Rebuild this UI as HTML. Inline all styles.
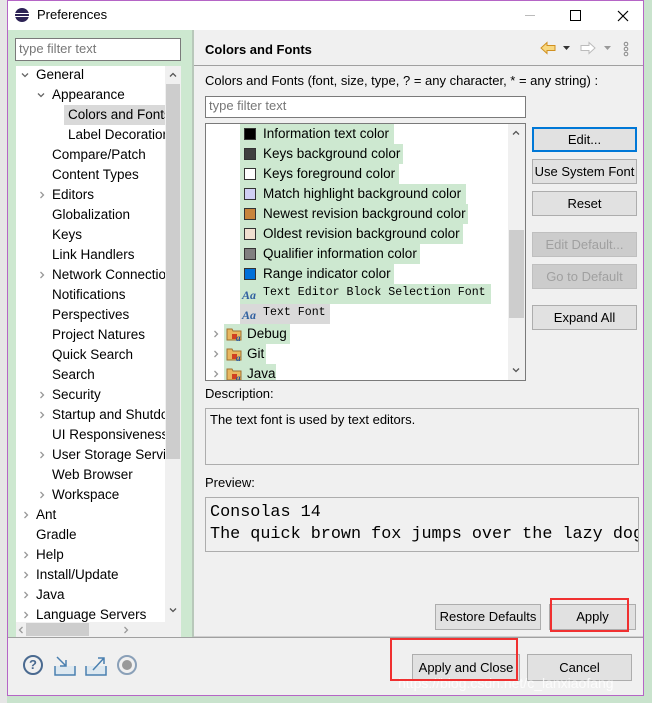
<!DOCTYPE html>
<html><head><meta charset="utf-8"><style>
*{margin:0;padding:0;box-sizing:border-box}
body{width:652px;height:703px;overflow:hidden;background:#c9e3cd;font-family:"Liberation Sans","Noto Sans CJK SC",sans-serif;font-size:13px;color:#000;position:relative}
.a{position:absolute}
.t{position:absolute;white-space:nowrap;line-height:20px;top:0}
.btn{position:absolute;background:#e1e1e1;border:1px solid #adadad;text-align:center;line-height:24px;font-size:13px}
.dis{color:#a0a0a0;background:#cccccc;border-color:#bfbfbf}
.sw{position:absolute;width:12px;height:12px;border:1px solid #333}
.gr{position:absolute;background:#cde8d0;height:20px}
.mono{font-family:"Liberation Mono",monospace}
.cr{position:absolute;width:8px;height:8px}
.tr .t{font-size:13.5px}
</style></head><body>
<svg width="0" height="0" style="position:absolute"><defs>
<symbol id="r" viewBox="0 0 8 8"><polyline points="2.5,1 5.5,4 2.5,7" fill="none" stroke="#999" stroke-width="1.3"/></symbol>
<symbol id="d" viewBox="0 0 8 8"><polyline points="1,2.5 4,5.5 7,2.5" fill="none" stroke="#666" stroke-width="1.3"/></symbol>
<symbol id="u" viewBox="0 0 8 8"><polyline points="1,5.5 4,2.5 7,5.5" fill="none" stroke="#555" stroke-width="1.3"/></symbol>
<symbol id="dn" viewBox="0 0 8 8"><polyline points="1,2.5 4,5.5 7,2.5" fill="none" stroke="#555" stroke-width="1.3"/></symbol>
<symbol id="f" viewBox="0 0 16 16"><path d="M1 3h5l1 2h8v9H1z" fill="#e8b860" stroke="#a07030"/><rect x="6" y="8" width="5" height="5" fill="#d04020"/><text x="10" y="15" font-size="9" font-style="italic" font-weight="bold" fill="#2050a0" font-family="Liberation Serif">a</text></symbol>
</defs></svg>
<div class="a" style="left:0;top:0;width:7px;height:703px;background:#e6e6e6"></div>
<div class="a" style="left:7px;top:0;width:637px;height:696px;border:1px solid #b565c6;background:#f0f0f0"></div>
<!-- title bar -->
<div class="a" style="left:8px;top:1px;width:635px;height:29px;background:#fff"></div>
<div class="a" style="left:15px;top:8px;width:14px;height:14px;border-radius:50%;background:#2c2255"></div>
<div class="a" style="left:15px;top:13px;width:14px;height:1px;background:#fff"></div>
<div class="a" style="left:15px;top:16px;width:14px;height:1px;background:#fff"></div>
<div class="t" style="left:37px;top:5px">Preferences</div>
<div class="a" style="left:525px;top:15px;width:10px;height:1px;background:#bbb"></div>
<div class="a" style="left:570px;top:10px;width:11px;height:11px;border:1px solid #000"></div>
<svg class="a" style="left:617px;top:10px" width="12" height="12"><path d="M1 1L11 11M11 1L1 11" stroke="#000" stroke-width="1.2"/></svg>
<!-- left panel -->
<div class="a" style="left:8px;top:30px;width:184px;height:607px;background:#cde8d0"></div>
<div class="a" style="left:192px;top:30px;width:2px;height:607px;background:#b8c8ba"></div>
<div class="a" style="left:15px;top:38px;width:166px;height:23px;background:#fff;border:1px solid #7a7a7a"></div>
<div class="t" style="left:19px;top:39px;color:#777">type filter text</div>
<div class="a" style="left:16px;top:66px;width:165px;height:570px;background:#fff"></div>
<div class="a" style="left:165px;top:66px;width:16px;height:556px;background:#f0f0f0"></div>
<div class="a" style="left:166px;top:84px;width:14px;height:375px;background:#cdcdcd"></div>
<svg class="cr" style="left:169px;top:71px"><use href="#u"/></svg>
<svg class="cr" style="left:169px;top:606px"><use href="#dn"/></svg>
<div class="a" style="left:16px;top:622px;width:165px;height:15px;background:#f0f0f0"></div>
<div class="a" style="left:26px;top:623px;width:63px;height:13px;background:#cdcdcd"></div>
<svg class="cr" style="left:17px;top:626px;transform:scaleX(-1)"><use href="#r"/></svg>
<svg class="cr" style="left:122px;top:626px"><use href="#r"/></svg>
<div class="a" style="left:64px;top:105px;width:101px;height:20px;background:#d9d9d9"></div>
<div class="tr" style="position:absolute;left:16px;top:65px;width:149px;height:557px;overflow:hidden">
<svg class="cr" style="left:5px;top:6px"><use href="#d"/></svg><div class="t" style="left:20px;top:0">General</div>
<svg class="cr" style="left:21px;top:26px"><use href="#d"/></svg><div class="t" style="left:36px;top:20px">Appearance</div>
<div class="t" style="left:52px;top:40px">Colors and Fonts</div>
<div class="t" style="left:52px;top:60px">Label Decorations</div>
<div class="t" style="left:36px;top:80px">Compare/Patch</div>
<div class="t" style="left:36px;top:100px">Content Types</div>
<svg class="cr" style="left:22px;top:126px"><use href="#r"/></svg><div class="t" style="left:36px;top:120px">Editors</div>
<div class="t" style="left:36px;top:140px">Globalization</div>
<div class="t" style="left:36px;top:160px">Keys</div>
<div class="t" style="left:36px;top:180px">Link Handlers</div>
<svg class="cr" style="left:22px;top:206px"><use href="#r"/></svg><div class="t" style="left:36px;top:200px">Network Connections</div>
<div class="t" style="left:36px;top:220px">Notifications</div>
<div class="t" style="left:36px;top:240px">Perspectives</div>
<div class="t" style="left:36px;top:260px">Project Natures</div>
<div class="t" style="left:36px;top:280px">Quick Search</div>
<div class="t" style="left:36px;top:300px">Search</div>
<svg class="cr" style="left:22px;top:326px"><use href="#r"/></svg><div class="t" style="left:36px;top:320px">Security</div>
<svg class="cr" style="left:22px;top:346px"><use href="#r"/></svg><div class="t" style="left:36px;top:340px">Startup and Shutdown</div>
<div class="t" style="left:36px;top:360px">UI Responsiveness</div>
<svg class="cr" style="left:22px;top:386px"><use href="#r"/></svg><div class="t" style="left:36px;top:380px">User Storage Service</div>
<div class="t" style="left:36px;top:400px">Web Browser</div>
<svg class="cr" style="left:22px;top:426px"><use href="#r"/></svg><div class="t" style="left:36px;top:420px">Workspace</div>
<svg class="cr" style="left:6px;top:446px"><use href="#r"/></svg><div class="t" style="left:20px;top:440px">Ant</div>
<div class="t" style="left:20px;top:460px">Gradle</div>
<svg class="cr" style="left:6px;top:486px"><use href="#r"/></svg><div class="t" style="left:20px;top:480px">Help</div>
<svg class="cr" style="left:6px;top:506px"><use href="#r"/></svg><div class="t" style="left:20px;top:500px">Install/Update</div>
<svg class="cr" style="left:6px;top:526px"><use href="#r"/></svg><div class="t" style="left:20px;top:520px">Java</div>
<svg class="cr" style="left:6px;top:546px"><use href="#r"/></svg><div class="t" style="left:20px;top:540px">Language Servers</div>
</div>
<!-- right panel -->
<div class="t" style="left:205px;top:40px;font-weight:bold">Colors and Fonts</div>
<svg class="a" style="left:540px;top:41px" width="16" height="14"><path d="M1 7L7 1.5V4.5H15V9.5H7V12.5Z" fill="#f8d880" stroke="#d09020"/></svg>
<svg class="a" style="left:563px;top:46px" width="8" height="5"><path d="M0 0H7L3.5 4Z" fill="#333"/></svg>
<svg class="a" style="left:580px;top:41px" width="16" height="14"><path d="M15 7L9 1.5V4.5H1V9.5H9V12.5Z" fill="#fff" stroke="#bbb"/></svg>
<svg class="a" style="left:604px;top:46px" width="8" height="5"><path d="M0 0H7L3.5 4Z" fill="#999"/></svg>
<svg class="a" style="left:622px;top:41px" width="8" height="16"><circle cx="4" cy="3" r="1.8" fill="none" stroke="#888"/><circle cx="4" cy="8" r="1.8" fill="none" stroke="#888"/><circle cx="4" cy="13" r="1.8" fill="none" stroke="#888"/></svg>
<div class="a" style="left:194px;top:65px;width:449px;height:1px;background:#a0a0a0"></div>
<div class="t" style="left:205px;top:71px">Colors and Fonts (font, size, type, ? = any character, * = any string) :</div>
<div class="a" style="left:205px;top:96px;width:321px;height:22px;background:#fff;border:1px solid #7a7a7a"></div>
<div class="t" style="left:209px;top:96px;color:#777">type filter text</div>
<div class="a" style="left:205px;top:123px;width:321px;height:258px;background:#fff;border:1px solid #7a7a7a"></div>
<div class="a" style="left:508px;top:124px;width:17px;height:256px;background:#f0f0f0"></div>
<div class="a" style="left:509px;top:230px;width:15px;height:88px;background:#cdcdcd"></div>
<svg class="cr" style="left:512px;top:129px"><use href="#u"/></svg>
<svg class="cr" style="left:512px;top:366px"><use href="#dn"/></svg>
<div class="tr" style="position:absolute;left:206px;top:124px;width:302px;height:256px;overflow:hidden">
<div class="gr" style="left:34px;top:0;width:154px"></div><div class="sw" style="left:38px;top:4px;background:#000"></div><div class="t" style="left:57px;top:0">Information text color</div>
<div class="gr" style="left:34px;top:20px;width:163px"></div><div class="sw" style="left:38px;top:24px;background:#404040"></div><div class="t" style="left:57px;top:20px">Keys background color</div>
<div class="gr" style="left:34px;top:40px;width:159px"></div><div class="sw" style="left:38px;top:44px;background:#fff"></div><div class="t" style="left:57px;top:40px">Keys foreground color</div>
<div class="gr" style="left:34px;top:60px;width:226px"></div><div class="sw" style="left:38px;top:64px;background:#d0d0f4"></div><div class="t" style="left:57px;top:60px">Match highlight background color</div>
<div class="gr" style="left:34px;top:80px;width:228px"></div><div class="sw" style="left:38px;top:84px;background:#c8843c"></div><div class="t" style="left:57px;top:80px">Newest revision background color</div>
<div class="gr" style="left:34px;top:100px;width:223px"></div><div class="sw" style="left:38px;top:104px;background:#f0e0d0"></div><div class="t" style="left:57px;top:100px">Oldest revision background color</div>
<div class="gr" style="left:34px;top:120px;width:180px"></div><div class="sw" style="left:38px;top:124px;background:#808080"></div><div class="t" style="left:57px;top:120px">Qualifier information color</div>
<div class="gr" style="left:34px;top:140px;width:154px"></div><div class="sw" style="left:38px;top:144px;background:#0070d8"></div><div class="t" style="left:57px;top:140px">Range indicator color</div>
<div class="gr" style="left:34px;top:160px;width:251px"></div><div class="t" style="left:36px;top:161px;color:#3060a0;font-style:italic;font-weight:bold;font-family:'Liberation Serif',serif;font-size:12px">Aa</div><div class="t mono" style="left:57px;top:159px;font-size:11.6px">Text Editor Block Selection Font</div>
<div class="gr" style="left:34px;top:180px;width:90px;background:#d9d9d9"></div><div class="t" style="left:36px;top:181px;color:#3060a0;font-style:italic;font-weight:bold;font-family:'Liberation Serif',serif;font-size:12px">Aa</div><div class="t mono" style="left:57px;top:179px;font-size:11.6px">Text Font</div>
<div class="gr" style="left:18px;top:200px;width:66px"></div><svg class="cr" style="left:6px;top:206px"><use href="#r"/></svg><svg class="a" style="left:20px;top:202px" width="16" height="16"><use href="#f"/></svg><div class="t" style="left:41px;top:200px">Debug</div>
<div class="gr" style="left:18px;top:220px;width:42px"></div><svg class="cr" style="left:6px;top:226px"><use href="#r"/></svg><svg class="a" style="left:20px;top:222px" width="16" height="16"><use href="#f"/></svg><div class="t" style="left:41px;top:220px">Git</div>
<div class="gr" style="left:18px;top:240px;width:52px"></div><svg class="cr" style="left:6px;top:246px"><use href="#r"/></svg><svg class="a" style="left:20px;top:242px" width="16" height="16"><use href="#f"/></svg><div class="t" style="left:41px;top:240px">Java</div>
</div>
<div class="btn" style="left:532px;top:127px;width:105px;height:25px;border:2px solid #0078d7;line-height:21px">Edit...</div>
<div class="btn" style="left:532px;top:159px;width:105px;height:25px">Use System Font</div>
<div class="btn" style="left:532px;top:191px;width:105px;height:25px">Reset</div>
<div class="btn dis" style="left:532px;top:232px;width:105px;height:25px">Edit Default...</div>
<div class="btn dis" style="left:532px;top:264px;width:105px;height:25px">Go to Default</div>
<div class="btn" style="left:532px;top:305px;width:105px;height:25px">Expand All</div>
<div class="t" style="left:205px;top:384px">Description:</div>
<div class="a" style="left:205px;top:408px;width:434px;height:57px;border:1px solid #adadad"></div>
<div class="t" style="left:210px;top:410px">The text font is used by text editors.</div>
<div class="t" style="left:205px;top:473px">Preview:</div>
<div class="a" style="left:205px;top:497px;width:434px;height:55px;border:1px solid #adadad;overflow:hidden">
<div class="t mono" style="left:4px;top:4px;font-size:16.8px;line-height:22px">Consolas 14<br>The quick brown fox jumps over the lazy dog.</div></div>
<div class="btn" style="left:435px;top:604px;width:106px;height:26px">Restore Defaults</div>
<div class="btn" style="left:549px;top:604px;width:87px;height:26px">Apply</div>
<div class="a" style="left:194px;top:636px;width:449px;height:1px;background:#cfcfcf"></div>
<div class="a" style="left:8px;top:637px;width:635px;height:1px;background:#a0a0a0"></div>
<!-- bottom icons -->
<div class="a" style="left:23px;top:655px;width:20px;height:20px;border:2px solid #4a6a90;border-radius:50%;text-align:center;font-weight:bold;color:#4a6a90;line-height:16px;font-size:13px">?</div>
<svg class="a" style="left:53px;top:655px" width="24" height="22"><path d="M2 11V20H22V11" fill="#dde8f0" stroke="#4a80b0" stroke-width="1.5"/><path d="M4 2L13 11M13 5V11H7" fill="none" stroke="#4a80b0" stroke-width="1.5"/></svg>
<svg class="a" style="left:84px;top:655px" width="24" height="22"><path d="M2 11V20H22V11" fill="#dde8f0" stroke="#4a80b0" stroke-width="1.5"/><path d="M9 15L20 3M14 3H20V9" fill="none" stroke="#4a80b0" stroke-width="1.5"/></svg>
<div class="a" style="left:117px;top:655px;width:20px;height:20px;border:2px solid #8aa0b8;border-radius:50%"></div>
<div class="a" style="left:122px;top:660px;width:10px;height:10px;background:#999;border-radius:50%"></div>
<div class="btn" style="left:412px;top:654px;width:108px;height:27px;line-height:25px">Apply and Close</div>
<div class="btn" style="left:527px;top:654px;width:105px;height:27px;line-height:25px">Cancel</div>
<div class="t" style="left:398px;top:673px;color:rgba(255,255,255,.8);font-size:14px">https://blog.csdn.net/c_lanxiaofang</div>
<!-- red highlight boxes -->
<div class="a" style="left:550px;top:598px;width:79px;height:34px;border:2px solid #f03030"></div>
<div class="a" style="left:390px;top:638px;width:128px;height:43px;border:2px solid #f03030"></div>
</body></html>
